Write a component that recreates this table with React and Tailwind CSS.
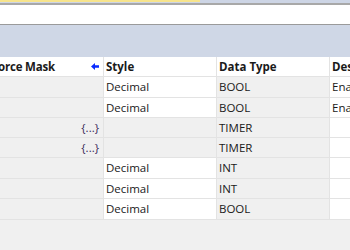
import React from "react";

const rows = [
  { mask: "", style: "Decimal", type: "BOOL", desc: "Ena", styleGray: false, h: "h-[21px]" },
  { mask: "", style: "Decimal", type: "BOOL", desc: "Ena", styleGray: false, h: "h-[20px]" },
  { mask: "{...}", style: "", type: "TIMER", desc: "", styleGray: true, h: "h-[20px]" },
  { mask: "{...}", style: "", type: "TIMER", desc: "", styleGray: true, h: "h-[20px]" },
  { mask: "", style: "Decimal", type: "INT", desc: "", styleGray: false, h: "h-[21px]" },
  { mask: "", style: "Decimal", type: "INT", desc: "", styleGray: false, h: "h-[20px]" },
  { mask: "", style: "Decimal", type: "BOOL", desc: "", styleGray: false, h: "h-[21px]" },
];

export default function App() {
  return (
    <div
      className="w-[350px] h-[250px] overflow-hidden bg-[#f0f0f0] flex flex-col text-[11.5px] text-[#1a1a1a]"
      style={{ fontFamily: '"Open Sans", "Noto Sans", sans-serif' }}
    >
      <div className="flex h-[2px] shrink-0">
        <div className="w-[200px] bg-[#f7e48c]" />
        <div className="flex-1 bg-[#cdd5e5]" />
      </div>
      <div className="h-[1px] bg-[#cdd5e5] shrink-0" />
      <div className="h-[2px] bg-[#a8a8a8] shrink-0" />
      <div className="h-[19px] bg-white shrink-0" />
      <div className="h-[1px] bg-[#9a9a9a] shrink-0" />
      <div className="h-[32px] bg-[#cfd7e6] shrink-0" />
      <div className="flex h-[19px] bg-white shrink-0 font-bold items-center">
        <div className="w-[104px] h-full flex items-center justify-between border-r border-[#e3e3e3] pr-[4px] shrink-0">
          <span className="ml-[-2px] tracking-[-0.2px]">orce Mask</span>
          <svg width="8" height="7" viewBox="0 0 8 7">
            <path d="M0 3.5 L4 0 L4 2.3 L8 2.3 L8 4.7 L4 4.7 L4 7 Z" fill="#0a2bff" />
          </svg>
        </div>
        <div className="w-[113px] h-full flex items-center pl-[2px] border-r border-[#e3e3e3] shrink-0">Style</div>
        <div className="w-[113px] h-full flex items-center pl-[2px] border-r border-[#e3e3e3] shrink-0">Data Type</div>
        <div className="flex-1 h-full flex items-center pl-[2px] whitespace-nowrap overflow-hidden">Description</div>
      </div>
      {rows.map((r, i) => (
        <div key={i} className={"flex shrink-0 border-t border-[#e3e3e3] items-stretch " + r.h}>
          <div className="w-[104px] bg-[#f0f0f0] flex items-center justify-end pr-[4px] border-r border-[#e3e3e3] shrink-0 text-[#3a2a5a]">
            {r.mask}
          </div>
          <div
            className={
              "w-[113px] flex items-center pl-[2px] border-r border-[#e3e3e3] shrink-0 " +
              (r.styleGray ? "bg-[#f0f0f0]" : "bg-white")
            }
          >
            {r.style}
          </div>
          <div className="w-[113px] bg-[#f0f0f0] flex items-center pl-[2px] border-r border-[#e3e3e3] shrink-0">
            {r.type}
          </div>
          <div className="flex-1 bg-white flex items-center pl-[2px] whitespace-nowrap overflow-hidden">
            {r.desc}
          </div>
        </div>
      ))}
      <div className="h-[1px] bg-[#e3e3e3] shrink-0" />
      <div className="flex-1 bg-[#f0f0f0]" />
    </div>
  );
}
